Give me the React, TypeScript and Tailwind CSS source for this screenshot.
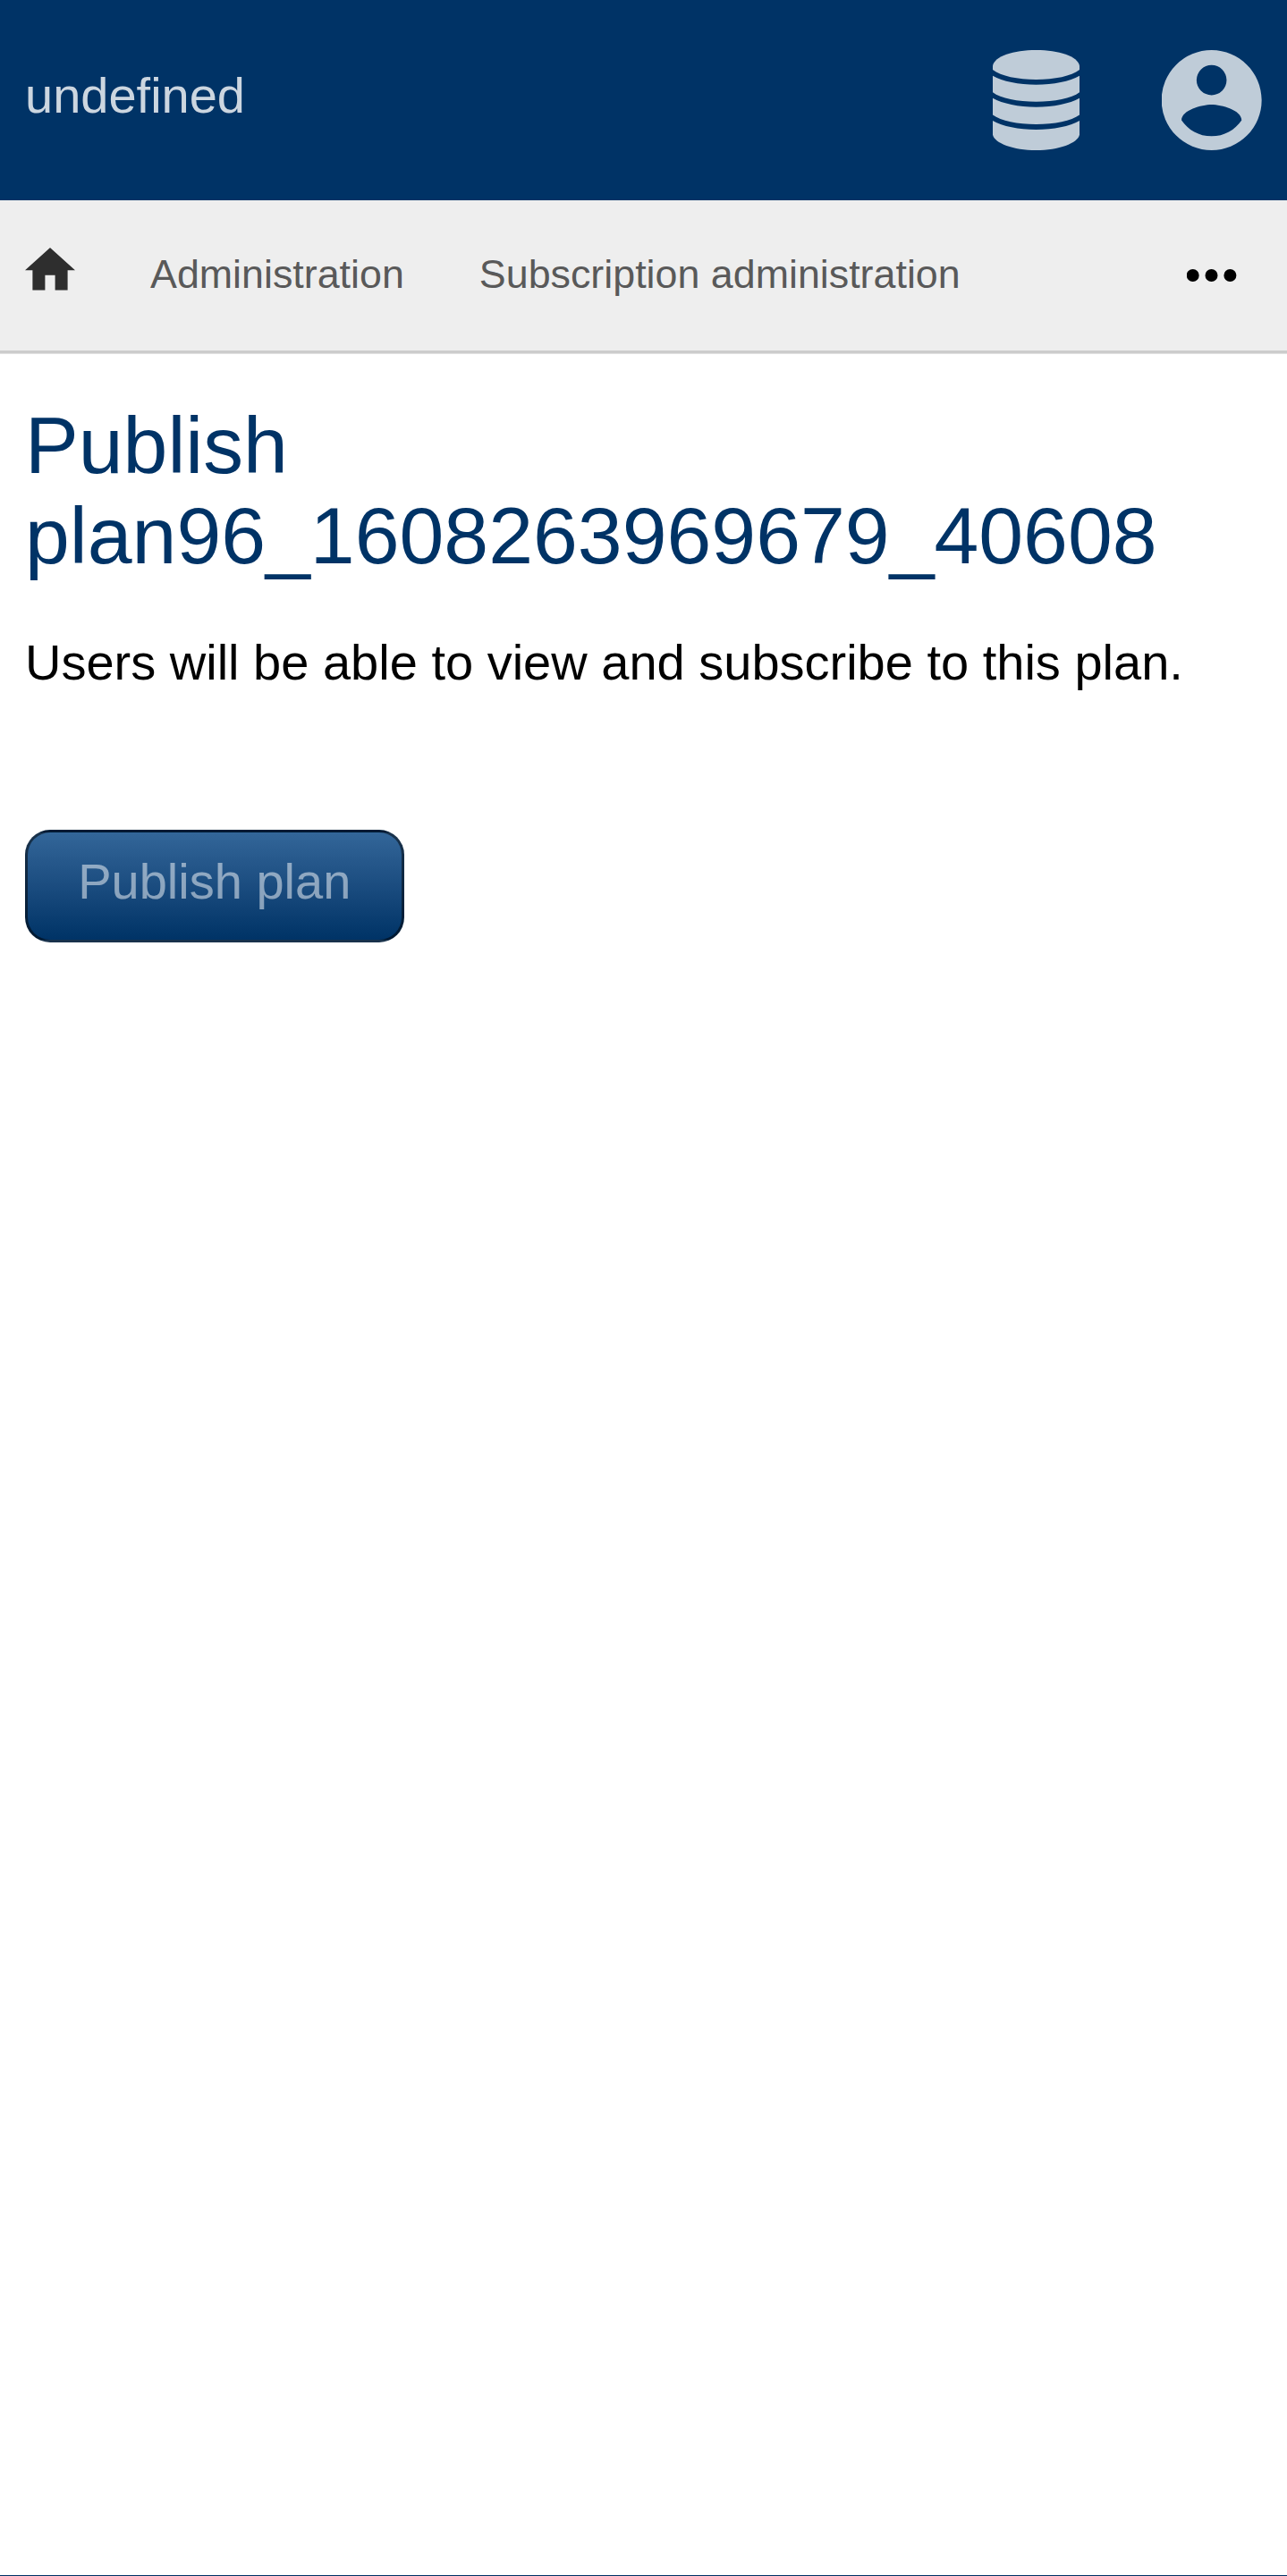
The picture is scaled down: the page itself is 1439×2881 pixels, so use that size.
function DatabaseIcon() {
  return (
    <svg className="h-28 w-[97px]" viewBox="0 0 97 112" fill="currentColor" aria-hidden="true">
      <path d="M0 17.5C2 7 23 0 48.500 0S95 7 97 17.500V22C88 29 69 33 48.500 33S9 29 0 22Z" />
      <path d="M0 28.700C11 35 29 38.700 48.500 38.700S86 35 97 28.700V47.300C88 54 69 57.800 48.500 57.800S9 54 0 47.300Z" />
      <path d="M0 53.800C11 60 29 63.700 48.500 63.700S86 60 97 53.800V72.500C88 79 69 83 48.500 83S9 79 0 72.500Z" />
      <path d="M0 79C11 85.300 29 89 48.500 89S86 85.300 97 79V94.700C95 104 74 112 48.500 112S2 104 0 94.700Z" />
    </svg>
  );
}

function AccountIcon() {
  return (
    <svg className="h-28 w-28" viewBox="2.06 2 20 20" fill="currentColor" aria-hidden="true">
      <path d="M12,19.2C9.5,19.2 7.29,17.92 6,16C6.03,14 10,12.9 12,12.9C14,12.9 17.97,14 18,16C16.71,17.92 14.5,19.2 12,19.2M12,5A3,3 0 0,1 15,8A3,3 0 0,1 12,11A3,3 0 0,1 9,8A3,3 0 0,1 12,5M12,2A10,10 0 0,0 2,12A10,10 0 0,0 12,22A10,10 0 0,0 22,12C22,6.47 17.5,2 12,2Z" />
    </svg>
  );
}

function HomeIcon() {
  return (
    <svg className="h-12 w-14" viewBox="2 3 20 17.143" fill="currentColor" aria-hidden="true">
      <path d="M10,20V14H14V20H19V12H22L12,3L2,12H5V20H10Z" />
    </svg>
  );
}

function MoreIcon() {
  return (
    <svg className="h-4 w-14" viewBox="0 0 56 16" fill="currentColor" aria-hidden="true">
      <circle cx="6.7" cy="8" r="7" />
      <circle cx="27.500" cy="8" r="7" />
      <circle cx="48.400" cy="8" r="7" />
    </svg>
  );
}

export default function App() {
  return (
    <div className="flex h-[2881px] w-full flex-col border-b border-[#003366] bg-white font-['Liberation_Sans',Arial,sans-serif] text-[56px] leading-[64px] text-black">
      <header className="flex h-56 items-start justify-between bg-[#003366] px-7 text-white">
        <span className="pt-[75px] text-[#ccd6e0]">undefined</span>
        <div className="flex gap-[92px] pt-14 text-[#bfccd8]">
          <button aria-label="Data">
            <DatabaseIcon />
          </button>
          <button aria-label="Account">
            <AccountIcon />
          </button>
        </div>
      </header>

      <nav className="flex h-[171px] items-start border-b-[3px] border-[#cccccc] bg-[#eeeeee] pl-7 pr-14 text-[44.8px] text-[#595959] shadow-[0_1px_0_#e0e0e0]">
        <a className="mt-[53px] text-[#2e2e2e]" aria-label="Home">
          <HomeIcon />
        </a>
        <a className="ml-[84px] mt-[50px]">Administration</a>
        <a className="ml-[84px] mt-[50px]">Subscription administration</a>
        <button className="ml-auto mt-[76px] text-black" aria-label="More">
          <MoreIcon />
        </button>
      </nav>

      <main className="flex flex-col items-start px-7 pt-[53px]">
        <h1 className="text-[89.6px] leading-[101px] text-[#003366]">
          Publish
          <br />
          plan96_1608263969679_40608
        </h1>
        <p className="mt-[59px]">Users will be able to view and subscribe to this plan.</p>
        <button className="mt-[155px] flex h-[126px] w-[423.5px] justify-center rounded-[28px] border-[3px] border-black/50 bg-linear-to-b from-[#336699] to-[#003366] pt-[23px]">
          <span className="text-white/50">Publish plan</span>
        </button>
      </main>
    </div>
  );
}
